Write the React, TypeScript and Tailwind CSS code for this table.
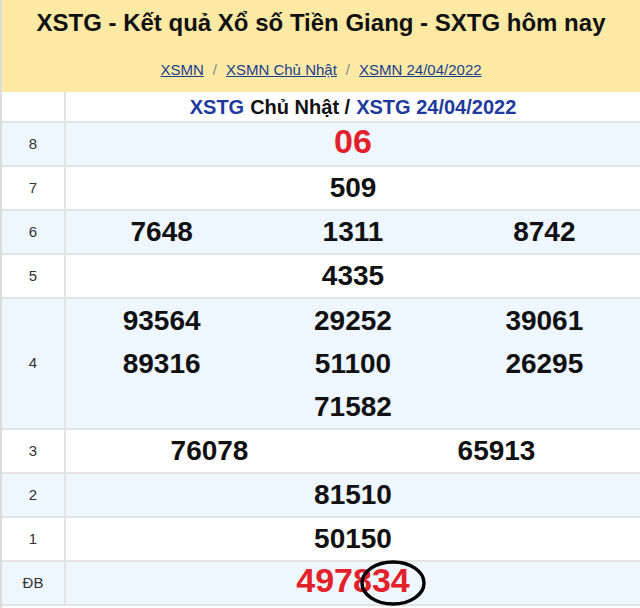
const rows: { label: string; nums: string[][]; red?: boolean; cols: number }[] = [
  { label: "8", nums: [["06"]], red: true, cols: 1 },
  { label: "7", nums: [["509"]], cols: 1 },
  { label: "6", nums: [["7648", "1311", "8742"]], cols: 3 },
  { label: "5", nums: [["4335"]], cols: 1 },
  {
    label: "4",
    nums: [
      ["93564", "29252", "39061"],
      ["89316", "51100", "26295"],
      ["", "71582", ""],
    ],
    cols: 3,
  },
  { label: "3", nums: [["76078", "65913"]], cols: 2 },
  { label: "2", nums: [["81510"]], cols: 1 },
  { label: "1", nums: [["50150"]], cols: 1 },
  { label: "ĐB", nums: [["497834"]], red: true, cols: 1 },
];

const gridCols: Record<number, string> = {
  1: "grid-cols-1",
  2: "grid-cols-2",
  3: "grid-cols-3",
};

export default function App() {
  return (
    <div
      className="w-[640px] h-[608px] bg-white border-l-2 border-[#dcdcdc] overflow-hidden"
      style={{ fontFamily: '"Liberation Sans", Arial, sans-serif' }}
    >
      <div className="bg-[#fce9a4] h-[92px] flex flex-col items-center">
        <h1 className="text-[24px] font-bold text-[#111] mt-[8px] leading-[30px]">
          XSTG - Kết quả Xổ số Tiền Giang - SXTG hôm nay
        </h1>
        <div className="mt-[23px] text-[15px] flex gap-[9px] leading-[18px]">
          <a className="underline text-[#1b3d8f]">XSMN</a>
          <span className="text-[#888]">/</span>
          <a className="underline text-[#1b3d8f]">XSMN Chủ Nhật</a>
          <span className="text-[#888]">/</span>
          <a className="underline text-[#1b3d8f]">XSMN 24/04/2022</a>
        </div>
      </div>

      <div className="relative">
        <div className="flex h-[31px] border-b-2 border-[#e3e3e3]">
          <div className="w-[64px] border-r-2 border-[#e3e3e3]" />
          <div className="flex-1 flex items-center justify-center text-[20px] font-bold text-[#111]">
            <span className="text-[#1e3a9c]">XSTG</span>
            <span className="ml-[6px]">Chủ Nhật /</span>
            <span className="ml-[6px] text-[#1e3a9c]">XSTG 24/04/2022</span>
          </div>
        </div>

        {rows.map((row, i) => (
          <div
            key={row.label}
            className={`flex border-b-2 border-[#e3e3e3] ${i % 2 === 0 ? "bg-[#eef6ff]" : "bg-white"}`}
          >
            <div className="w-[64px] border-r-2 border-[#e3e3e3] flex items-center justify-center text-[15px] text-[#333]">
              {row.label}
            </div>
            <div className="flex-1 flex flex-col">
              {row.nums.map((line, j) => (
                <div
                  key={j}
                  className={`grid ${gridCols[row.cols]} ${row.nums.length > 1 ? "h-[43px]" : "h-[42px]"} ${
                    row.red ? "pb-[7px]" : ""
                  } items-center`}
                >
                  {line.map((n, k) => (
                    <div
                      key={k}
                      className={`text-center font-bold ${
                        row.red ? "text-[#e3212b] text-[34px] leading-[34px]" : "text-[#111] text-[28px]"
                      }`}
                    >
                      {n}
                    </div>
                  ))}
                </div>
              ))}
            </div>
          </div>
        ))}

        <svg
          className="absolute left-[357px] top-[467px]"
          width="68"
          height="48"
          viewBox="0 0 68 48"
        >
          <ellipse cx="34" cy="24" rx="31" ry="21" fill="none" stroke="#000" strokeWidth="3.5" />
        </svg>
      </div>
    </div>
  );
}
